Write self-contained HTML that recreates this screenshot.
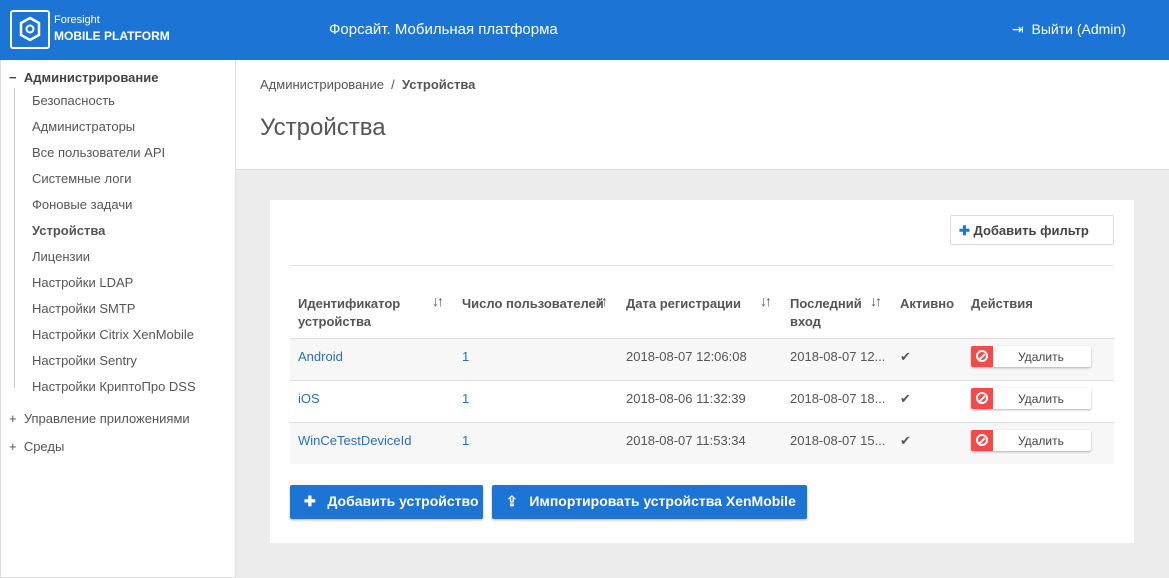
<!DOCTYPE html>
<html><head><meta charset="utf-8"><style>
*{box-sizing:border-box;margin:0;padding:0}
body{width:1169px;height:578px;overflow:hidden;font-family:"Liberation Sans",Arial,sans-serif;background:#ececec;position:relative;color:#555}
.hdr{position:absolute;left:0;top:0;width:1169px;height:60px;background:#1c74d4;color:#fff}
.logo{position:absolute;left:10px;top:10px;width:40px;height:39px;border:2px solid #fff;border-radius:3px}
.brand{position:absolute;left:54px;top:12px;font-size:11px;line-height:16px}
.brand b{font-size:12px}
.title{position:absolute;left:329px;top:21px;font-size:15px}
.exit{position:absolute;left:1012px;top:21px;font-size:14px}
.side{position:absolute;left:0;top:60px;width:236px;height:518px;background:#fff;border-right:1px solid #ddd;border-left:1px solid #ddd;border-bottom:1px solid #ddd;font-size:13px}
.side div{position:absolute;white-space:nowrap}
.tree{position:absolute;left:13px;width:1px;height:300px;background:#ccc}
.top{position:absolute;left:236px;top:60px;width:933px;height:110px;background:#fff;border-bottom:1px solid #ddd}
.bc{position:absolute;left:24px;top:17px;font-size:13px;color:#555}
.h1{position:absolute;left:24px;top:54px;font-size:24px;color:#555;font-weight:300}
.card{position:absolute;left:270px;top:200px;width:864px;height:343px;background:#fff}
.flt{position:absolute;left:680px;top:15px;width:164px;height:30px;border:1px solid #ddd;border-radius:2px;font-size:13px;font-weight:bold;padding:7px 0 0 8px;color:#444}
.sep{position:absolute;left:20px;top:65px;width:824px;height:1px;background:#e5e5e5}
.th{position:absolute;top:95px;font-size:13px;font-weight:bold;line-height:18px;color:#555}
.row{position:absolute;left:20px;width:824px;height:42px;font-size:13px;border-top:1px solid #ddd;color:#555}
.row span{position:absolute;top:10px}
.g{background:#f7f7f7}
.lnk{color:#2a6fb8}
.del{position:absolute;left:681px;top:7px;width:120px;height:21px;background:#fff;box-shadow:0 1px 2px rgba(0,0,0,.3);border-radius:2px;font-size:12px}
.del i{position:absolute;left:0;top:0;width:22px;height:21px;background:#f34a4a;border-radius:2px 0 0 2px}
.del i:after{content:"";position:absolute;left:5px;top:4px;width:8px;height:8px;border:2px solid #fff;border-radius:50%}
.del i:before{content:"";position:absolute;left:7px;top:10px;width:8px;height:2px;background:#fff;transform:rotate(-45deg)}
.del em{font-style:normal;position:absolute;left:47px;top:4px;color:#444}
.btn{position:absolute;top:285px;height:34px;background:#1c74d4;color:#fff;font-size:14px;font-weight:bold;border-radius:2px;padding:8px 0 0 14px;box-shadow:0 1px 2px rgba(0,0,0,.3)}
.srt{position:absolute;top:93px;font-size:14px;font-weight:bold;color:#555;letter-spacing:-2px}
</style></head><body>
<div class="hdr">
<div class="logo"><svg width="36" height="35" viewBox="0 0 36 35"><polygon points="18,6 27,11 27,23 18,28 9,23 9,11" fill="none" stroke="#fff" stroke-width="2.5"/><circle cx="18" cy="17" r="3.5" fill="none" stroke="#fff" stroke-width="2"/></svg></div>
<div class="brand">Foresight<br><b>MOBILE PLATFORM</b></div>
<div class="title">Форсайт. Мобильная платформа</div>
<div class="exit">⇥&nbsp; Выйти (Admin)</div>
</div>
<div class="side">
<div style="left:8px;top:10px;font-weight:bold;color:#444">−&nbsp; Администрирование</div>
<div class="tree" style="top:28px"></div>
<div style="left:31px;top:33px">Безопасность</div>
<div style="left:31px;top:59px">Администраторы</div>
<div style="left:31px;top:85px">Все пользователи API</div>
<div style="left:31px;top:111px">Системные логи</div>
<div style="left:31px;top:137px">Фоновые задачи</div>
<div style="left:31px;top:163px;font-weight:bold">Устройства</div>
<div style="left:31px;top:189px">Лицензии</div>
<div style="left:31px;top:215px">Настройки LDAP</div>
<div style="left:31px;top:241px">Настройки SMTP</div>
<div style="left:31px;top:267px">Настройки Citrix XenMobile</div>
<div style="left:31px;top:293px">Настройки Sentry</div>
<div style="left:31px;top:319px">Настройки КриптоПро DSS</div>
<div style="left:8px;top:351px">+&nbsp; Управление приложениями</div>
<div style="left:8px;top:379px">+&nbsp; Среды</div>
</div>
<div class="top"><div class="bc">Администрирование &nbsp;/&nbsp; <b>Устройства</b></div><div class="h1">Устройства</div></div>
<div class="card">
<div class="flt"><span style="color:#1c74d4">✚</span> Добавить фильтр</div>
<div class="sep"></div>
<div class="th" style="left:28px">Идентификатор<br>устройства</div><div class="srt" style="left:162px">↓↑</div>
<div class="th" style="left:192px">Число пользователей</div><div class="srt" style="left:326px">↓↑</div>
<div class="th" style="left:356px">Дата регистрации</div><div class="srt" style="left:490px">↓↑</div>
<div class="th" style="left:520px">Последний<br>вход</div><div class="srt" style="left:600px">↓↑</div>
<div class="th" style="left:630px">Активно</div>
<div class="th" style="left:701px">Действия</div>
<div class="row g" style="top:138px"><span class="lnk" style="left:8px">Android</span><span class="lnk" style="left:172px">1</span><span style="left:336px">2018-08-07 12:06:08</span><span style="left:500px">2018-08-07 12...</span><span style="left:610px">✔</span><div class="del"><i></i><em>Удалить</em></div></div>
<div class="row" style="top:180px"><span class="lnk" style="left:8px">iOS</span><span class="lnk" style="left:172px">1</span><span style="left:336px">2018-08-06 11:32:39</span><span style="left:500px">2018-08-07 18...</span><span style="left:610px">✔</span><div class="del"><i></i><em>Удалить</em></div></div>
<div class="row g" style="top:222px"><span class="lnk" style="left:8px">WinCeTestDeviceId</span><span class="lnk" style="left:172px">1</span><span style="left:336px">2018-08-07 11:53:34</span><span style="left:500px">2018-08-07 15...</span><span style="left:610px">✔</span><div class="del"><i></i><em>Удалить</em></div></div>
<div class="btn" style="left:20px;width:193px">✚&nbsp;&nbsp; Добавить устройство</div>
<div class="btn" style="left:222px;width:315px">⇪&nbsp;&nbsp; Импортировать устройства XenMobile</div>
</div>
</body></html>
